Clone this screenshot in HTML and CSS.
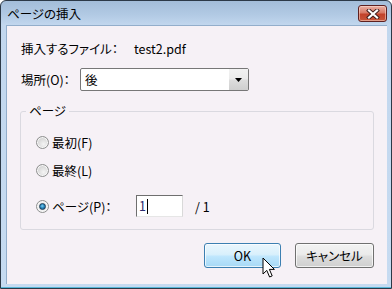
FILE: index.html
```html
<!DOCTYPE html>
<html lang="ja">
<head>
<meta charset="utf-8">
<title>ページの挿入</title>
<link rel="stylesheet" href="styles.css">
</head>
<body>
<div class="window">
  <div class="titlebar">
    <span class="title">ページの挿入</span>
    <span class="close">
      <svg width="14" height="10" viewBox="0 0 14 10">
        <path d="M3 1.5 L11 8.5 M11 1.5 L3 8.5" stroke="#3a1a1a" stroke-width="4" stroke-linecap="square" fill="none"/>
        <path d="M3 1.5 L11 8.5 M11 1.5 L3 8.5" stroke="#ffffff" stroke-width="2.2" stroke-linecap="square" fill="none"/>
      </svg>
    </span>
  </div>
  <div class="frame">
    <div class="client">
      <div class="row row-file">
        <span class="label-file">挿入するファイル：</span>
        <span class="value">test2.pdf</span>
      </div>
      <div class="row row-place">
        <span class="label-place">場所(O)：</span>
        <div class="combo">
          <span class="combo-text">後</span>
          <span class="combo-btn">
            <svg width="8" height="5" viewBox="0 0 8 5"><path d="M0 0 H7 L3.5 4 Z" fill="#000"/></svg>
          </span>
        </div>
      </div>
      <fieldset class="group">
        <legend>ページ</legend>
        <div class="opt opt-first">
          <span class="radio"></span>
          <span>最初(F)</span>
        </div>
        <div class="opt opt-last">
          <span class="radio"></span>
          <span>最終(L)</span>
        </div>
        <div class="opt opt-page">
          <span class="radio checked"><span class="dot"></span></span>
          <span class="label-page">ページ(P)：</span>
          <span class="field"><span class="field-text">1</span><span class="caret"></span></span>
          <span class="total">/ 1</span>
        </div>
      </fieldset>
      <div class="buttons">
        <span class="btn btn-ok">OK</span>
        <span class="btn btn-cancel">キャンセル</span>
      </div>
    </div>
  </div>
  <svg class="cursor" width="14" height="22" viewBox="0 0 14 22">
    <path d="M1 1 L1 17 L4.8 13.4 L7.6 20 L10.2 18.9 L7.4 12.4 L12.4 12.4 Z" fill="#ffffff" stroke="#000000" stroke-width="1" stroke-linejoin="miter"/>
  </svg>
</div>
</body>
</html>
```
FILE: styles.css
```css
* { box-sizing: border-box; }
html, body { margin: 0; padding: 0; }
body {
  width: 392px;
  height: 289px;
  overflow: hidden;
  font-family: "Noto Sans CJK JP", "Noto Sans", sans-serif;
  font-size: 12.5px;
  color: #000;
  font-feature-settings: "palt";
}
.window {
  position: relative;
  width: 392px;
  height: 289px;
  border: 1px solid #2c3947;
  border-radius: 6px 6px 0 0;
  background: linear-gradient(to bottom, #a3bdd9 0px, #b2cae4 14px, #c2d7ee 24px, #c6dbf1 100%);
  display: flex;
  flex-direction: column;
}
.titlebar {
  height: 24px;
  display: flex;
  align-items: center;
  justify-content: space-between;
  padding: 0 4px 0 6px;
}
.title {
  font-size: 12.5px;
  line-height: 16px;
  color: #000;
  margin-top: 1px;
}
.close {
  align-self: flex-start;
  margin-top: 4px;
  width: 29px;
  height: 17px;
  border: 1px solid #5e2020;
  border-radius: 3px;
  background: linear-gradient(to bottom, #eab0a4 0%, #d87a66 45%, #c2422a 55%, #c7563a 100%);
  box-shadow: inset 0 0 0 1px rgba(255,230,220,0.5);
  display: flex;
  align-items: center;
  justify-content: center;
}
.frame {
  flex: 1;
  padding: 0 4px 3px 5px;
  border-bottom: 1px solid #58b6d8;
  display: flex;
}
.client {
  flex: 1;
  background: #f6f1f6;
  border-left: 1px solid #93aecb;
  border-top: 1px solid #93aecb;
  padding: 15px 13px 0 13px;
  display: flex;
  flex-direction: column;
}
.row { display: flex; align-items: center; padding-left: 1px; }
.row-file { height: 16px; line-height: 16px; }
.label-file { width: 113px; }
.row-place { margin-top: 11px; height: 23px; }
.label-place { width: 59px; }
.combo {
  width: 169px;
  height: 23px;
  border: 1px solid #777;
  border-radius: 2px;
  background: #fff;
  display: flex;
  box-shadow: inset 0 0 0 1px #fff;
}
.combo-text { flex: 1; padding-left: 4px; line-height: 21px; }
.combo-btn {
  width: 19px;
  background: linear-gradient(to bottom, #f2f2f2 0%, #ebebeb 45%, #dcdcdc 55%, #cfcfcf 100%);
  display: flex;
  align-items: center;
  justify-content: center;
  padding-top: 1px;
  padding-left: 1px;
}
.group {
  margin: 12px 0 0 0;
  padding: 12px 0 11px 15px;
  border: 1px solid #dad9e0;
  border-radius: 3px;
  min-width: 0;
  height: 127px;
}
.group legend {
  padding: 0 3px;
  margin-left: -10px;
  line-height: 16px;
}
.opt { display: flex; align-items: center; height: 22px; }
.opt-last { margin-top: 6px; }
.opt-page { margin-top: 14px; }
.radio {
  width: 13px;
  height: 13px;
  border-radius: 50%;
  border: 1px solid #8e8f8f;
  background: radial-gradient(circle at 60% 65%, #f4f4f4 0%, #dadada 55%, #c8c8c8 100%);
  box-shadow: inset 0 0 0 1px #f7f7f7;
  margin-right: 3px;
  display: flex;
  align-items: center;
  justify-content: center;
}
.radio.checked { background: #f0f0f0; }
.dot {
  width: 7px;
  height: 7px;
  border-radius: 50%;
  background: radial-gradient(circle at 45% 40%, #7fd0f2 0%, #2a8ac0 45%, #0e4e7c 100%);
  border: 1px solid #1e3e58;
}
.label-page { width: 84px; }
.field {
  width: 47px;
  height: 22px;
  background: #fff;
  border-top: 1px solid #6f6f6f;
  border-left: 1px solid #6f6f6f;
  border-right: 1px solid #d9d9d9;
  border-bottom: 1px solid #e6e6e6;
  display: flex;
  align-items: center;
  padding-left: 2px;
}
.field-text { color: #2b2b6e; line-height: 16px; }
.caret { width: 1px; height: 15px; background: #000; margin-left: 1px; }
.total { margin-left: 12px; }
.buttons {
  display: flex;
  justify-content: flex-end;
  gap: 14px;
  margin-top: 13px;
}
.btn {
  height: 25px;
  display: flex;
  align-items: center;
  justify-content: center;
  border-radius: 3px;
  line-height: 16px;
}
.btn-ok {
  width: 77px;
  border: 1px solid #3c7fb1;
  background: linear-gradient(to bottom, #eaf6fd 0%, #d9f0fc 45%, #bee6fd 55%, #a7d9f5 100%);
  box-shadow: inset 0 0 0 1px rgba(255,255,255,0.7);
}
.btn-cancel {
  width: 79px;
  border: 1px solid #707070;
  background: linear-gradient(to bottom, #f2f2f2 0%, #ebebeb 45%, #dddddd 55%, #cfcfcf 100%);
  box-shadow: inset 0 0 0 1px rgba(255,255,255,0.7);
}
.cursor {
  position: absolute;
  left: 261px;
  top: 256px;
}
```
